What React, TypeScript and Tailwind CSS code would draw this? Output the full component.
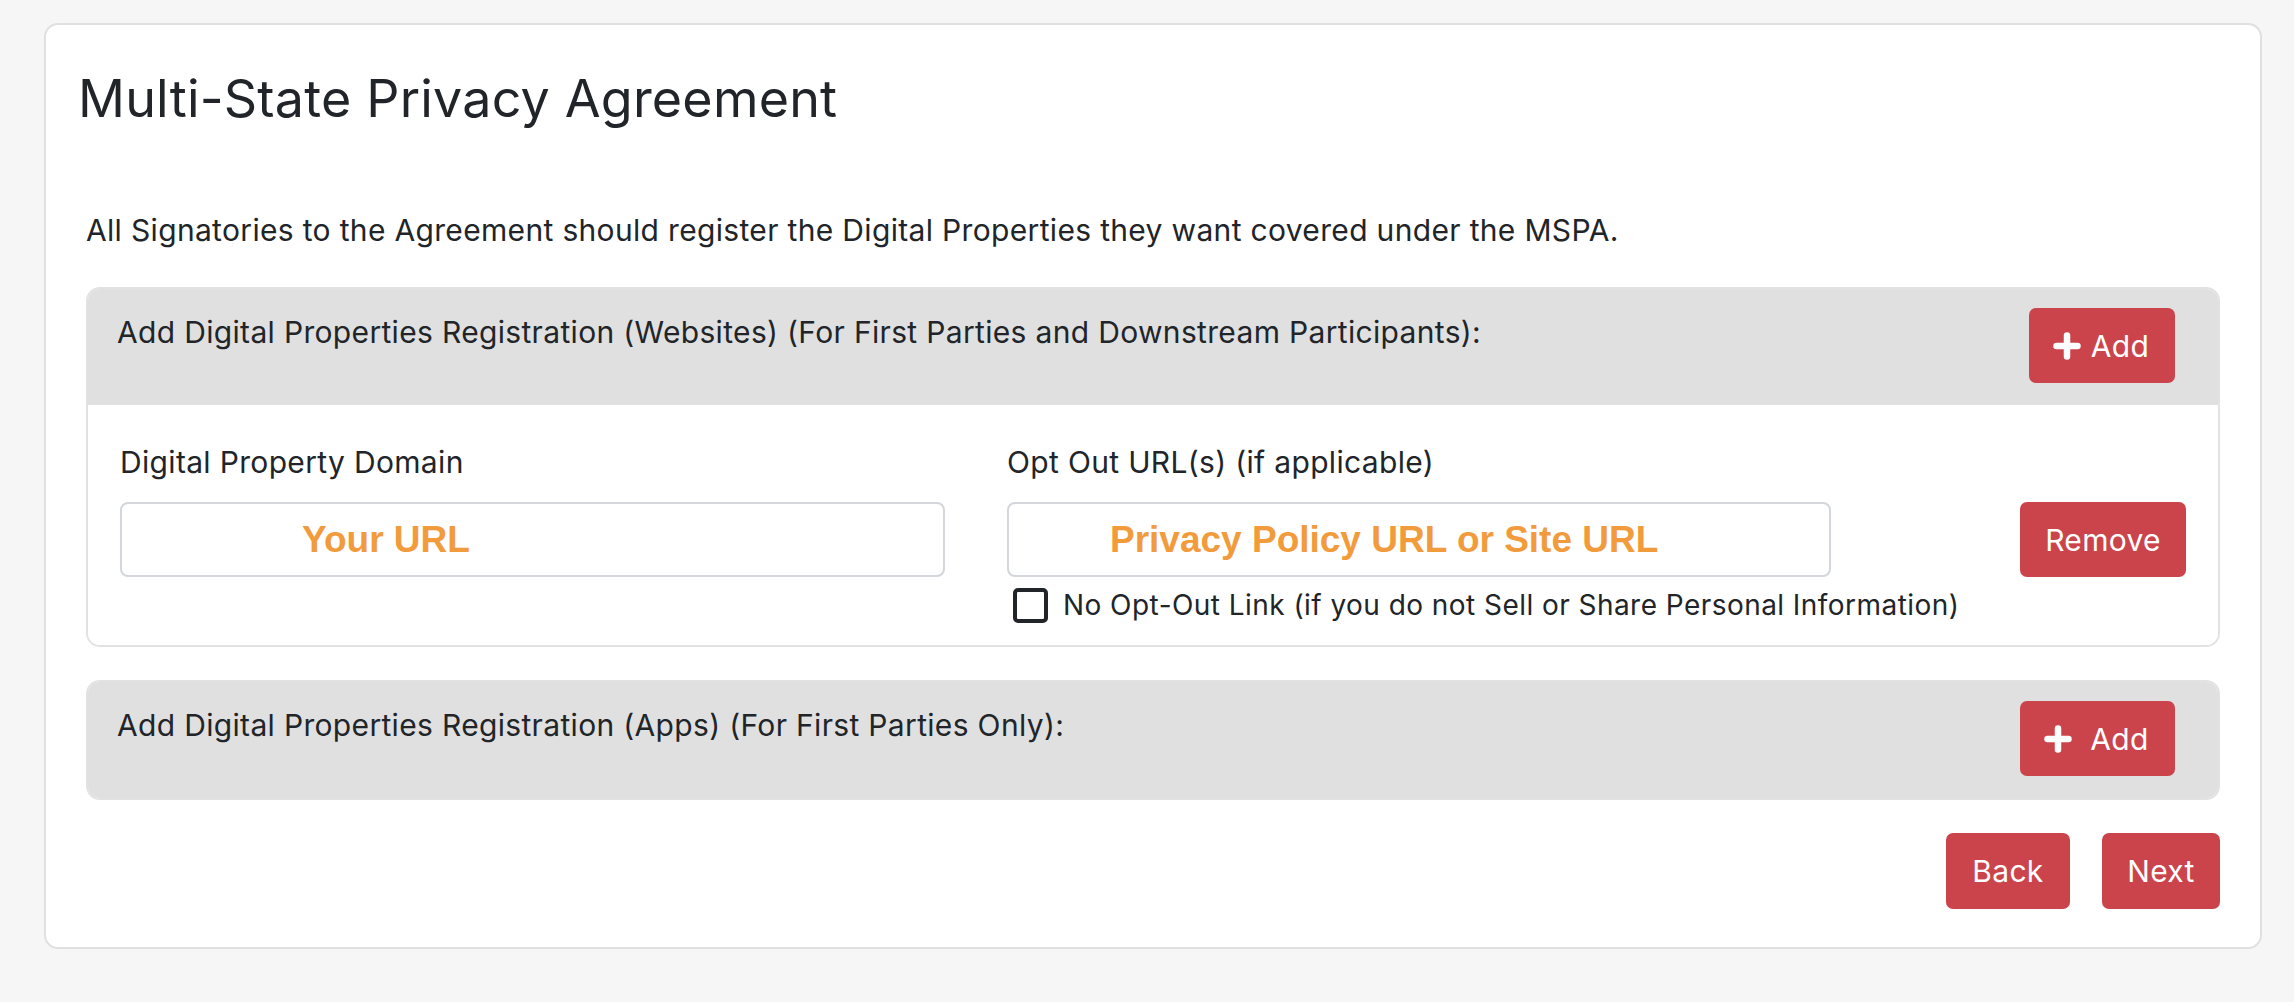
import React from "react";

// Thick rounded plus used on the Add buttons
function PlusIcon() {
  return (
    <svg width="28" height="28" viewBox="0 0 28 28" fill="none">
      <path
        d="M14 3.5v21M3.5 14h21"
        stroke="white"
        strokeWidth="6.5"
        strokeLinecap="round"
      />
    </svg>
  );
}

function RedButton({
  children,
  className = "",
}: {
  children: React.ReactNode;
  className?: string;
}) {
  return (
    <button
      type="button"
      className={`flex h-[75px] shrink-0 items-center justify-center rounded-[7px] bg-[#cb444b] text-[30px] leading-none tracking-[0.3px] text-white ${className}`}
    >
      {children}
    </button>
  );
}

function SectionHeader({ title, wide }: { title: string; wide?: boolean }) {
  return (
    <div className="flex items-start justify-between bg-[#e0e0e0] pb-[22px] pl-[29px] pr-[43px] pt-[19px]">
      <p className="mt-[2px] text-[30px] leading-[45px] tracking-[0.33px] text-[#212529]">
        {title}
      </p>
      <RedButton
        className={wide ? "w-[155px] gap-[18px] pr-[2px]" : "w-[146px] gap-[10px] pr-[2px]"}
      >
        <PlusIcon />
        <span>Add</span>
      </RedButton>
    </div>
  );
}

export default function App() {
  return (
    <div className="min-h-screen bg-[#f6f6f6] pl-[44px] pt-[23px] font-['Inter','Noto_Sans',sans-serif] text-[#212529]">
      <div className="w-[2218px] rounded-[14px] border-2 border-[#e0e0e0] bg-white pb-[38px]">
        {/* Heading */}
        <h1 className="pl-[32px] pt-[43px] text-[52px] leading-[62px] font-normal tracking-[0.2px] text-[#212529]">
          Multi-State Privacy Agreement
        </h1>

        <div className="px-[40px]">
          <p className="mt-[78px] text-[30px] leading-[45px] tracking-[0.33px]">
            All Signatories to the Agreement should register the Digital
            Properties they want covered under the MSPA.
          </p>

          {/* Websites registration */}
          <div className="mt-[34px] overflow-hidden rounded-[14px] border-2 border-[#e2e2e2]">
            <SectionHeader title="Add Digital Properties Registration (Websites) (For First Parties and Downstream Participants):" />
            <div className="flex bg-white pb-[22px] pl-[32px] pr-[32px] pt-[35px]">
              <div className="w-[825px] shrink-0">
                <label className="mb-[17px] block text-[30px] leading-[45px] tracking-[0.33px]">
                  Digital Property Domain
                </label>
                <input
                  type="text"
                  placeholder="Your URL"
                  className="h-[75px] w-full rounded-[8px] border-2 border-[#d3d6da] bg-white pl-[180px] font-['Liberation_Sans',Arial,sans-serif] text-[37px] font-bold text-[#f29b3c] outline-none placeholder:text-[#f29b3c]"
                />
              </div>
              <div className="ml-[62px] w-[824px] shrink-0">
                <label className="mb-[17px] block text-[30px] leading-[45px] tracking-[0.33px]">
                  Opt Out URL(s) (if applicable)
                </label>
                <input
                  type="text"
                  placeholder="Privacy Policy URL or Site URL"
                  className="h-[75px] w-full rounded-[8px] border-2 border-[#d3d6da] bg-white pl-[101px] font-['Liberation_Sans',Arial,sans-serif] text-[37px] font-bold text-[#f29b3c] outline-none placeholder:text-[#f29b3c]"
                />
                <label className="mt-[11px] flex items-center gap-[15px] whitespace-nowrap pl-[6px] text-[28px] leading-[35px] tracking-[0.45px]">
                  <span className="block h-[35px] w-[35px] shrink-0 rounded-[5px] border-[4px] border-[#212529] bg-white" />
                  No Opt-Out Link (if you do not Sell or Share Personal
                  Information)
                </label>
              </div>
              <div className="ml-auto pt-[62px]">
                <RedButton className="w-[166px]">Remove</RedButton>
              </div>
            </div>
          </div>

          {/* Apps registration */}
          <div className="mt-[33px] overflow-hidden rounded-[14px] border-2 border-[#e2e2e2]">
            <SectionHeader
              wide
              title="Add Digital Properties Registration (Apps) (For First Parties Only):"
            />
          </div>

          <div className="mt-[33px] flex justify-end gap-[32px]">
            <RedButton className="h-[76px] w-[124px]">Back</RedButton>
            <RedButton className="h-[76px] w-[118px]">Next</RedButton>
          </div>
        </div>
      </div>
    </div>
  );
}
